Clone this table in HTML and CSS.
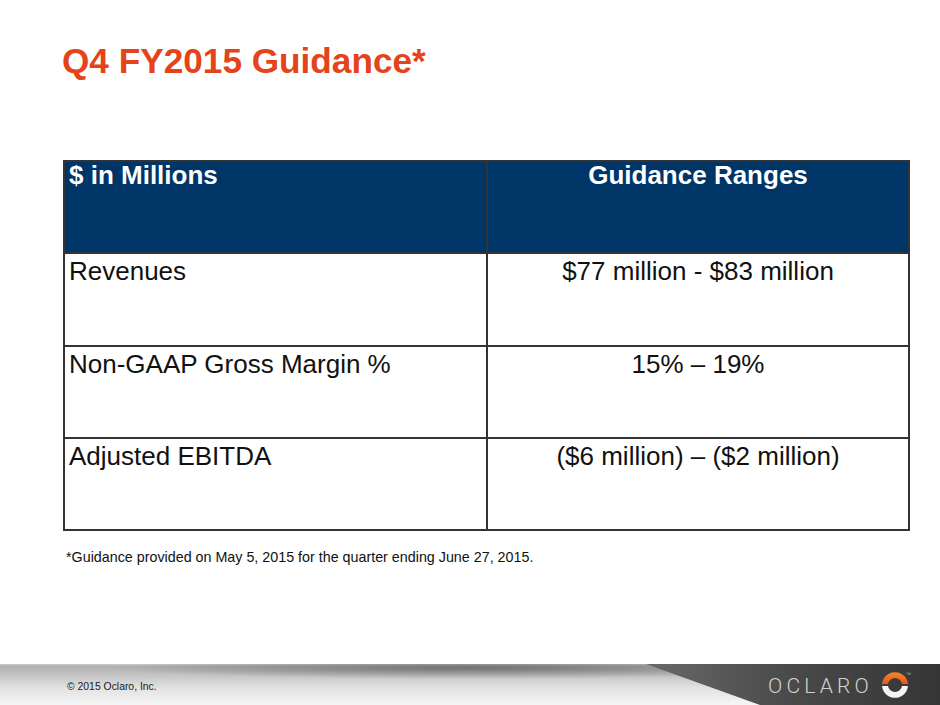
FILE: index.html
```html
<!DOCTYPE html>
<html lang="en">
<head>
<meta charset="utf-8">
<title>Q4 FY2015 Guidance</title>
<link rel="stylesheet" href="styles.css">
</head>
<body>
<div class="slide">
  <h1 class="title">Q4 FY2015 Guidance*</h1>
  <div class="grid">
    <div class="cell head">$ in Millions</div>
    <div class="cell head center">Guidance Ranges</div>
    <div class="cell">Revenues</div>
    <div class="cell center">$77 million - $83 million</div>
    <div class="cell">Non-GAAP Gross Margin %</div>
    <div class="cell center">15% – 19%</div>
    <div class="cell">Adjusted EBITDA</div>
    <div class="cell center">($6 million) – ($2 million)</div>
  </div>
  <p class="note">*Guidance provided on May 5, 2015 for the quarter ending June 27, 2015.</p>
  <footer class="footer">
    <span class="copy">© 2015 Oclaro, Inc.</span>
    <div class="logo">
      <span class="wordmark">OCLARO</span>
      <svg class="mark" width="28" height="28" viewBox="0 0 28 28" aria-hidden="true">
        <defs>
          <linearGradient id="og" x1="0" y1="0" x2="0" y2="1">
            <stop offset="0" stop-color="#f7862a"/>
            <stop offset="1" stop-color="#e9561c"/>
          </linearGradient>
        </defs>
        <path d="M1.05 13 A13 13 0 0 1 26.95 13 L21 13 A7.07 7.07 0 0 0 7 13 Z" fill="url(#og)"/>
        <path d="M1.05 15 A13 13 0 0 0 26.95 15 L21 15 A7.07 7.07 0 0 1 7 15 Z" fill="#f4f4f4"/>
      </svg>
      <span class="tm">™</span>
    </div>
  </footer>
</div>
</body>
</html>
```
FILE: styles.css
```css
html, body {
  margin: 0;
  padding: 0;
  background: #ffffff;
}

.slide {
  width: 940px;
  height: 705px;
  display: flex;
  flex-direction: column;
  font-family: "Liberation Sans", Arial, sans-serif;
  overflow: hidden;
}

.title {
  margin: 41px 0 0 62px;
  font-size: 35.2px;
  font-weight: bold;
  line-height: normal;
  color: #e5431a;
}

.grid {
  margin: 79px 0 0 63px;
  width: 847px;
  display: grid;
  grid-template-columns: 421px 420px;
  grid-template-rows: 90px 91px 90px 90px;
  gap: 2px;
  padding: 2px;
  box-sizing: border-box;
  background: #333333;
}

.cell {
  background: #ffffff;
  color: #111111;
  font-size: 26px;
  line-height: 1;
  padding: 4px 4px 0 4px;
}

.cell.head {
  background: #003567;
  color: #ffffff;
  font-weight: bold;
  padding-top: 0;
}

.cell.center {
  text-align: center;
}

.note {
  margin: 18px 0 0 66px;
  font-size: 14.3px;
  line-height: normal;
  color: #111111;
}

.footer {
  margin-top: auto;
  height: 41px;
  position: relative;
  display: flex;
  align-items: center;
  justify-content: space-between;
  padding: 3px 31px 0 67px;
  box-sizing: border-box;
  background:
    radial-gradient(ellipse 360px 11px at 470px 4px, rgba(70, 70, 70, 0.6), rgba(70, 70, 70, 0) 100%),
    linear-gradient(to bottom, #d0d0d0 0, #b0b0b0 2px, #c2c2c2 10px, #e2e2e2 24px, #f6f6f6 100%);
}

.footer::before {
  content: "";
  position: absolute;
  inset: 0;
  background: linear-gradient(90deg, #6a6a6a 640px, #4a4a4a 790px, #353535 940px);
  clip-path: polygon(646px 0, 100% 0, 100% 100%, 760px 100%);
  z-index: 0;
}

.copy {
  position: relative;
  z-index: 1;
  font-size: 10.4px;
  color: #1a1a1a;
}

.logo {
  position: relative;
  z-index: 1;
  display: flex;
  align-items: center;
}

.wordmark {
  font-family: Roboto, "Liberation Sans", sans-serif;
  font-weight: 300;
  font-size: 21px;
  letter-spacing: 4.2px;
  color: #d2d2d2;
  margin-right: 8px;
}

.mark {
  display: block;
  margin-top: -2px;
}

.tm {
  position: absolute;
  right: -2px;
  top: -2px;
  font-size: 5px;
  color: #bbbbbb;
}
```
